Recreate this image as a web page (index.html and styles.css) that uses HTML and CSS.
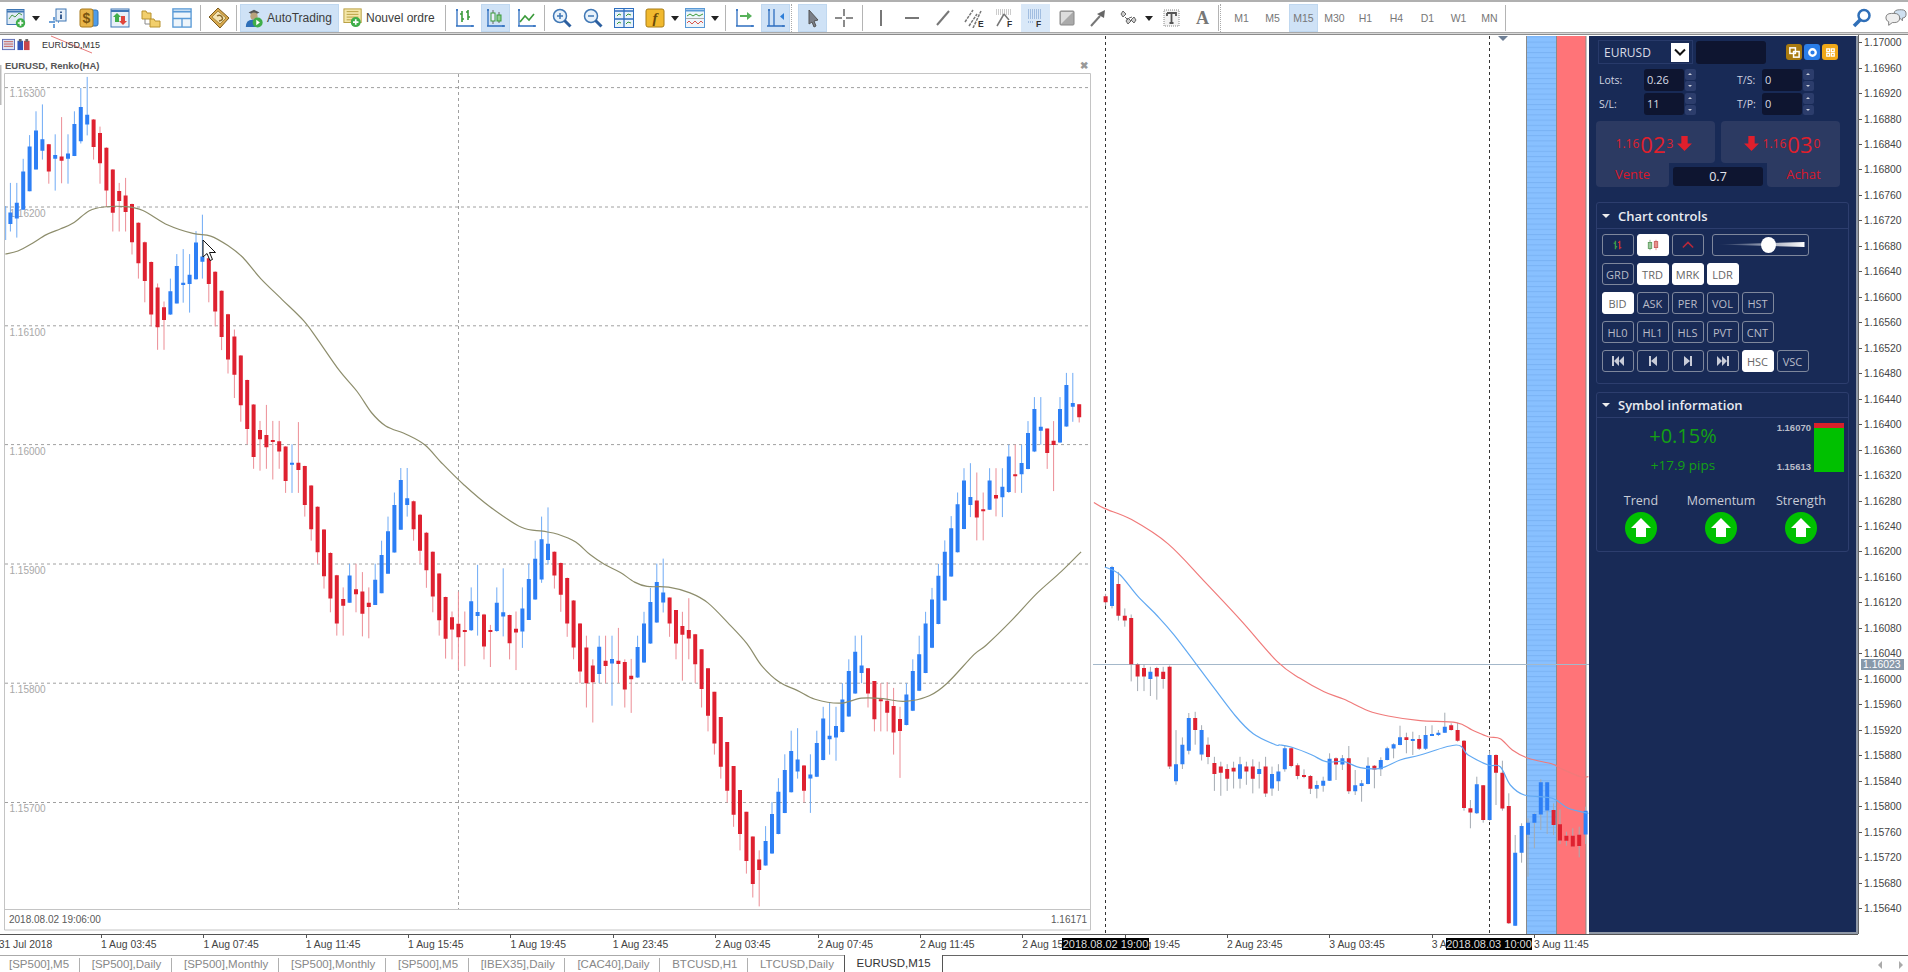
FILE: index.html
```html
<!DOCTYPE html>
<html lang="fr">
<head>
<meta charset="utf-8">
<title>MetaTrader</title>
<link rel="stylesheet" href="styles.css">
</head>
<body>
<div class="page">
  <header class="toolbar">
    <span class="tool"><svg class="ic" viewBox="0 0 20 20"><rect x="1" y="1.5" width="17" height="15" fill="#dfeaf5" stroke="#3f77b5"/><path d="M1 3.5h17" stroke="#3f77b5" stroke-width="2"/><path d="M3 11l3-4 3 2 4-4 3 2" stroke="#4a9a4a" fill="none"/><circle cx="14.5" cy="15" r="4.7" fill="#3fae49"/><path d="M14.5 12.3v5.4M11.8 15h5.4" stroke="#fff" stroke-width="1.7"/></svg></span>
    <span class="caret"></span>
    <span class="tool"><svg class="ic" viewBox="0 0 20 20"><path d="M1 14h6M10 14h1M6 9v3.500M6 16v4" stroke="#3f83cc" stroke-width="1.500" fill="none"/><rect x="8" y="1" width="10" height="12" fill="#e8f0f8" stroke="#3f77b5"/><path d="M13 3.500v1.500M13 6.500v4.500" stroke="#2a4f86" stroke-width="1.800"/></svg></span>
    <span class="tool"><svg class="ic" viewBox="0 0 20 20"><rect x="6" y="2" width="13" height="16" rx="2" fill="#4f9ce8" stroke="#3272b5"/><rect x="1" y="1" width="13" height="18" rx="2" fill="#e8b54a" stroke="#a97a1c"/><text x="7.500" y="15" class="ic-dollar">$</text></svg></span>
    <span class="tool"><svg class="ic" viewBox="0 0 20 20"><rect x="1" y="1" width="18" height="18" fill="#e8f0f8" stroke="#3f77b5"/><path d="M1 3h18" stroke="#3f77b5" stroke-width="2"/><path d="M7 5l4 4H9v5H5V9H3z" fill="#3fae49"/><path d="M13 17l-4-4h2V8h4v5h2z" fill="#e0453a"/></svg></span>
    <span class="tool"><svg class="ic" viewBox="0 0 20 20"><path d="M1 3h4l1 2h4v6H1z" fill="#f2cf6c" stroke="#b8922e"/><path d="M9 11h4l1 2h5v6H9z" fill="#f2cf6c" stroke="#b8922e"/><path d="M4 11v5h5" stroke="#8a8a8a" fill="none"/></svg></span>
    <span class="tool"><svg class="ic" viewBox="0 0 22 22"><rect x="1" y="1" width="20" height="20" fill="#eef5fb" stroke="#5a9ad6" stroke-width="1.500"/><path d="M1 4h20" stroke="#5a9ad6" stroke-width="2"/><path d="M1 11.500h20M11 11.500V21" stroke="#5a9ad6" stroke-width="1.500"/></svg></span>
    <span class="sep sep-6"></span>
    <span class="tool"><svg class="ic big" viewBox="0 0 22 22"><path d="M1 10L10 1l11 10-9 10z" fill="#d9a94e" stroke="#7a5a1c"/><path d="M4 10l6-6 8 7-6 6z" fill="#f4e4b4" stroke="#a98a3c"/><path d="M9 9q3-2 5 1t-3 4" stroke="#8a6a2a" fill="none" stroke-width="1.400"/></svg></span>
    <span class="sep sep-4"></span>
    <span class="labeled active auto"><svg class="ic" viewBox="0 0 22 22"><path d="M5 5l6-3 6 3-6 3z" fill="#555"/><circle cx="11" cy="9" r="4" fill="#b9a27c"/><path d="M2 21q0-9 9-8 4 0 4 3v5z" fill="#2e6fb8"/><circle cx="15" cy="16" r="5.500" fill="#3fae49"/><path d="M13.500 13l4 3-4 3z" fill="#fff"/></svg>AutoTrading</span>
    <span class="labeled order"><svg class="ic" viewBox="0 0 22 22"><rect x="1" y="1" width="19" height="15" fill="#f4e6a8" stroke="#b49a3a"/><path d="M4 4h13M4 7h13M4 10h13M4 13h8" stroke="#b49a3a"/><circle cx="14" cy="15.500" r="5.500" fill="#3fae49"/><path d="M14 12.500v6M11 15.500h6" stroke="#fff" stroke-width="1.800"/></svg>Nouvel ordre</span>
    <span class="sep"></span>
    <span class="tool"><svg class="ic" viewBox="0 0 20 20"><path d="M2 1v17h17M1 18h2M17 17v2M1 2h2" stroke="#2f6fc0" fill="none" stroke-width="1.300"/><path d="M7 3v11M5 6h2M7 11h2M13 2v10M11 4h2M13 9h2" stroke="#3a9a3a" stroke-width="1.600" fill="none"/></svg></span>
    <span class="tool active"><svg class="ic" viewBox="0 0 20 20"><path d="M2 1v17h17M1 18h2M17 17v2M1 2h2" stroke="#2f6fc0" fill="none" stroke-width="1.300"/><path d="M7 2v14M13 4v11" stroke="#666"/><rect x="5" y="5" width="4" height="8" fill="#eef" stroke="#3a9a3a"/><rect x="11" y="7" width="4" height="6" fill="#8fce8f" stroke="#3a9a3a"/></svg></span>
    <span class="tool"><svg class="ic" viewBox="0 0 20 20"><path d="M2 1v17h17M1 18h2M17 17v2M1 2h2" stroke="#2f6fc0" fill="none" stroke-width="1.300"/><path d="M3 14l5-6 4 4 5-6" stroke="#3a9a3a" fill="none" stroke-width="1.600"/></svg></span>
    <span class="sep sep-4"></span>
    <span class="tool"><svg class="ic" viewBox="0 0 20 20"><circle cx="8" cy="8" r="6.500" fill="#e8f2fb" stroke="#3f77b5" stroke-width="1.500"/><path d="M12.500 12.500l6 6" stroke="#2c5f9f" stroke-width="3"/><path d="M8 5v6M5 8h6" stroke="#3f77b5" stroke-width="1.500"/></svg></span>
    <span class="tool"><svg class="ic" viewBox="0 0 20 20"><circle cx="8" cy="8" r="6.500" fill="#e8f2fb" stroke="#3f77b5" stroke-width="1.500"/><path d="M12.500 12.500l6 6" stroke="#2c5f9f" stroke-width="3"/><path d="M5 8h6" stroke="#3f77b5" stroke-width="1.500"/></svg></span>
    <span class="tool"><svg class="ic" viewBox="0 0 20 20"><rect x="0.500" y="0.500" width="19" height="19" fill="#e8f2fb" stroke="#2f6fc0"/><path d="M0.500 3h19M10 1v19M1 11h19" stroke="#2f6fc0" stroke-width="1.300"/><path d="M3 8l2-2 2 1M12 8l2-2 3 1M3 16l2-2 2 1M12 16l2-2 3 1" stroke="#3a9a3a" fill="none"/></svg></span>
    <span class="tool"><svg class="ic" viewBox="0 0 20 20"><rect x="1" y="1" width="18" height="18" rx="2" fill="#f1b92e" stroke="#a87d16"/><text x="10" y="15" class="ic-f">f</text></svg></span>
    <span class="caret narrow"></span>
    <span class="tool"><svg class="ic" viewBox="0 0 20 20"><rect x="0.500" y="0.500" width="19" height="19" fill="#eef5fb" stroke="#5a9ad6"/><path d="M0.500 2.500h19" stroke="#5a9ad6" stroke-width="2"/><path d="M2 8l3-2 3 2 3-2 3 2 4-2" stroke="#3a9a3a" fill="none"/><path d="M1 10.500h18" stroke="#aaa"/><path d="M2 15l2-2 3 3 3-3 3 3 3-3 2 2" stroke="#d8574c" fill="none"/></svg></span>
    <span class="caret"></span>
    <span class="sep"></span>
    <span class="tool"><svg class="ic" viewBox="0 0 20 20"><path d="M2 1v17h17M1 18h2M17 17v2M1 2h2" stroke="#2f6fc0" fill="none" stroke-width="1.300"/><path d="M5 7h7V4l5 4-5 4V9H5z" fill="#57b15a"/></svg></span>
    <span class="tool active"><svg class="ic" viewBox="0 0 20 20"><path d="M3 1v17h16M1 18h3M17 17v2M2 2h2M8 1v17" stroke="#2f6fc0" fill="none" stroke-width="1.300"/><path d="M18 5v7l-4-3.500z" fill="#2f7fd8"/></svg></span>
    <span class="gripper"></span>
    <span class="tool active"><svg class="ic" viewBox="0 0 20 20"><path d="M6 2l9 10-4 1 2 5-2 1-2-5-3 2z" fill="#7b7f88" stroke="#555"/></svg></span>
    <span class="tool"><svg class="ic" viewBox="0 0 20 20"><path d="M1 10h7M12 10h7M10 1v7M10 12v7" stroke="#666" stroke-width="1.500"/></svg></span>
    <span class="sep sep-6"></span>
    <span class="tool"><svg class="ic" viewBox="0 0 20 20"><path d="M10 2v16" stroke="#777" stroke-width="2"/></svg></span>
    <span class="tool"><svg class="ic" viewBox="0 0 20 20"><path d="M3 10h14" stroke="#777" stroke-width="2"/></svg></span>
    <span class="tool"><svg class="ic" viewBox="0 0 20 20"><path d="M4 17L16 3" stroke="#777" stroke-width="2"/></svg></span>
    <span class="tool"><svg class="ic" viewBox="0 0 20 20"><path d="M1 14L9 2M5 18L13 6M9 20L17 3" stroke="#777" stroke-width="1.500" stroke-dasharray="3 1"/><text x="14" y="19" class="ic-letter">E</text></svg></span>
    <span class="tool"><svg class="ic" viewBox="0 0 20 20"><path d="M1 2h16M1 4h16M1 6h16" stroke="#999" stroke-dasharray="1 1"/><path d="M9 6L2 18M9 6l5 6" stroke="#777" stroke-width="1.500"/><text x="12" y="19" class="ic-letter">F</text></svg></span>
    <span class="tool active-soft"><svg class="ic" viewBox="0 0 20 20"><path d="M2 2h14M2 4h14M2 6h14M2 8h14M2 10h14" stroke="#6b93c9" stroke-dasharray="1 1"/><path d="M2 14h5" stroke="#6b93c9" stroke-dasharray="1 1"/><text x="10" y="19" class="ic-letter">F</text></svg></span>
    <span class="tool"><svg class="ic" viewBox="0 0 20 20"><rect x="3" y="3" width="14" height="14" rx="1" fill="#aaa" stroke="#888"/><path d="M4 4h12L4 16z" fill="#ddd"/></svg></span>
    <span class="tool"><svg class="ic" viewBox="0 0 20 20"><path d="M3 18L12 8" stroke="#777" stroke-width="2"/><path d="M17 2l-1 8-7-4z" fill="#666"/></svg></span>
    <span class="tool"><svg class="ic" viewBox="0 0 20 20"><path d="M4 3l3 3-3 3-2-3zM9 10l3 3-3 3-2-3zM15 9l2 3-2 3-3-3zM6 9l3 3M10 10l3-1" stroke="#666" fill="#ccc"/></svg></span>
    <span class="caret wide"></span>
    <span class="tool"><svg class="ic" viewBox="0 0 20 20"><rect x="2" y="2" width="15" height="16" fill="#f3f3f3" stroke="#888" stroke-dasharray="1 1"/><path d="M5 5h9v3M5 5v3M9.500 5v10M7.500 15h4" stroke="#555" stroke-width="1.800" fill="none"/></svg></span>
    <span class="tool"><span class="ic-a">A</span></span>
    <span class="sep sep-mini"></span>
    <span class="gripper"></span>
    <span class="tool tf">M1</span><span class="tool tf">M5</span><span class="tool tf active">M15</span><span class="tool tf">M30</span><span class="tool tf">H1</span><span class="tool tf">H4</span><span class="tool tf">D1</span><span class="tool tf">W1</span><span class="tool tf">MN</span>
    <span class="sep sep-mini"></span>
    <span class="spacer"></span>
    <span class="end-tool"><svg class="ic" viewBox="0 0 20 20"><circle cx="12" cy="7.500" r="5.500" fill="#fff" stroke="#2f6fb8" stroke-width="2.500"/><path d="M8 12l-6 6" stroke="#2f6fb8" stroke-width="3.500"/></svg></span>
    <span class="end-tool chat"><svg class="ic" viewBox="0 0 24 20"><path d="M10 5q0-4 6-4h2q5 0 5 4.500t-4 4.500v3l-3-3z" fill="#cfe0f0" stroke="#777"/><path d="M1 10q0-5 6-5h3q6 0 6 5t-6 5H8l-4 3v-4q-3-1-3-4z" fill="#eee" stroke="#777"/></svg></span>
  </header>
  <div class="toolbar-rule"></div>

  <main class="workspace">
    <section class="chart-area">
      <svg id="canvas" class="canvas" viewBox="0 35 1858 899" xmlns="http://www.w3.org/2000/svg">
        <defs>
          <pattern id="stripes" width="6" height="5.200" patternUnits="userSpaceOnUse">
            <rect width="6" height="5.200" class="band-blue"/>
            <rect width="6" height="1" class="band-stripe"/>
          </pattern>
        </defs>
        <rect x="1527" y="36" width="29.500" height="898" fill="url(#stripes)"/>
        <rect x="1556.500" y="36" width="29.500" height="898" class="band-red"/>
        <path class="band-edge" d="M1526.500 36v898M1556.500 36v898M1586 36v898"/>
        <path class="price-line" d="M1093 664.500H1589"/>
        <path class="cross" d="M1105.500 36V934M1489.500 36V934"/>
        <path class="marker" d="M1498 36h10l-5 5z"/>
        <path class="stray" d="M51 36L92 53"/>
        <path class="edge-bar" d="M0.500 65V105"/>
        <path class="window-edge" d="M4.500 73.500H1090.500V930H4.500ZM4.500 909.500H1090.500"/>
        <path class="grid" d="M5 87.600H1090M5 207H1090M5 325.800H1090M5 444.600H1090M5 564H1090M5 683.200H1090M5 802.500H1090M458.500 74V909"/>
        <text class="grid-label" x="9.500" y="97">1.16300</text>
        <text class="grid-label" x="9.500" y="216.500">1.16200</text>
        <text class="grid-label" x="9.500" y="335.500">1.16100</text>
        <text class="grid-label" x="9.500" y="454.500">1.16000</text>
        <text class="grid-label" x="9.500" y="573.500">1.15900</text>
        <text class="grid-label" x="9.500" y="692.500">1.15800</text>
        <text class="grid-label" x="9.500" y="811.500">1.15700</text>
        <text class="win-foot" x="9" y="923">2018.08.02 19:06:00</text>
        <text class="win-foot" x="1051" y="923">1.16171</text>
        <g id="candles"></g>
        <path class="cursor" d="M203 240v17l4-3.500 3 7 2.500-1-3-7h6z"/>
      </svg>
      <div class="win-tabs">
        <svg class="mini" viewBox="0 0 14 14"><rect x="0.500" y="1.500" width="13" height="11" fill="#dde4f4" stroke="#5c6bb5"/><path d="M2 4h10M2 6.500h10M2 9h10" stroke="#c2574f"/></svg>
        <svg class="mini" viewBox="0 0 14 14"><rect x="0.500" y="3" width="6" height="10" fill="#3356b8"/><rect x="7.500" y="3" width="6" height="10" fill="#c9464a"/><path d="M2 1h3v3H2zM9 1h3v3H9z" fill="#666"/></svg>
        <span class="win-name">EURUSD,M15</span>
      </div>
      <div class="inner-title"><span>EURUSD, Renko(HA)</span><span class="close">✖</span></div>

      <aside class="panel">
        <div class="p-top">
          <div class="combo"><span>EURUSD</span><span class="combo-btn"><svg viewBox="0 0 12 8" class="chev"><path d="M1 1.500l5 5 5-5" fill="none" stroke="#111" stroke-width="2"/></svg></span></div>
          <div class="dark-input blank"></div>
          <div class="p-icons">
            <span class="pi dark-gold"><svg viewBox="0 0 14 14"><rect x="2" y="2" width="6" height="6" fill="none" stroke="#fff" stroke-width="1.600"/><rect x="6" y="6" width="6" height="6" fill="none" stroke="#fff" stroke-width="1.600"/></svg></span>
            <span class="pi blue"><svg viewBox="0 0 14 14"><circle cx="7" cy="7" r="3.500" fill="none" stroke="#fff" stroke-width="2.500"/></svg></span>
            <span class="pi gold"><svg viewBox="0 0 14 14"><path d="M3 3h3v3H3zM8 3h3v3H8zM3 8h3v3H3zM8 8h3v3H8z" fill="none" stroke="#fff" stroke-width="1.400"/></svg></span>
          </div>
        </div>
        <div class="field-row">
          <label class="f-label">Lots:</label><span class="f-input">0.26</span><span class="spin"><i class="up"></i><i class="down"></i></span>
          <label class="f-label right">T/S:</label><span class="f-input">0</span><span class="spin"><i class="up"></i><i class="down"></i></span>
        </div>
        <div class="field-row">
          <label class="f-label">S/L:</label><span class="f-input">11</span><span class="spin"><i class="up"></i><i class="down"></i></span>
          <label class="f-label right">T/P:</label><span class="f-input">0</span><span class="spin"><i class="up"></i><i class="down"></i></span>
        </div>
        <div class="trade">
          <div class="trade-top">
            <div class="quote sell"><span class="q-s">1.16</span><span class="q-b">02</span><span class="q-s">3</span><svg class="q-arrow" viewBox="0 0 16 16"><path d="M5 1h6v7h4l-7 7-7-7h4z"/></svg></div>
            <div class="quote buy"><svg class="q-arrow" viewBox="0 0 16 16"><path d="M5 1h6v7h4l-7 7-7-7h4z"/></svg><span class="q-s">1.16</span><span class="q-b">03</span><span class="q-s">0</span></div>
          </div>
          <div class="trade-bottom">
            <div class="side left">Vente</div>
            <div class="spread"><span>0.7</span></div>
            <div class="side right">Achat</div>
          </div>
        </div>

        <section class="box controls">
          <h2 class="box-head"><i class="tri"></i>Chart controls</h2>
          <div class="btn-rows">
            <div class="btn-row">
              <span class="btn"><svg class="b-ic" viewBox="0 0 14 14"><path d="M4 2v10M2 5h2M4 9h2" stroke="#3a9a4a" stroke-width="1.600" fill="none"/><path d="M9 2v10M7 4h2M9 10h2" stroke="#c8303a" stroke-width="1.600" fill="none"/></svg></span>
              <span class="btn on"><svg class="b-ic" viewBox="0 0 14 14"><path d="M3.500 1v12" stroke="#8a8"/><rect x="1.500" y="4" width="4" height="7" fill="#9cc89c" stroke="#5a9a5a"/><path d="M10.500 1v12" stroke="#d88"/><rect x="8.500" y="3" width="4" height="7" fill="#e8908a" stroke="#c85a5a"/></svg></span>
              <span class="btn"><svg class="b-ic" viewBox="0 0 14 14"><path d="M1 10l6-6 6 6" stroke="#b8283a" stroke-width="1.800" fill="none"/></svg></span>
              <span class="btn slider"><span class="track"></span><span class="thumb"></span></span>
            </div>
            <div class="btn-row"><span class="btn">GRD</span><span class="btn on">TRD</span><span class="btn on">MRK</span><span class="btn on">LDR</span></div>
            <div class="btn-row"><span class="btn on">BID</span><span class="btn">ASK</span><span class="btn">PER</span><span class="btn">VOL</span><span class="btn">HST</span></div>
            <div class="btn-row"><span class="btn">HL0</span><span class="btn">HL1</span><span class="btn">HLS</span><span class="btn">PVT</span><span class="btn">CNT</span></div>
            <div class="btn-row">
              <span class="btn"><svg class="b-ic" viewBox="0 0 14 10"><path d="M1 0h2v10H1zM8 0v10L3 5zM13 0v10L8 5z" fill="#c8ccd8"/></svg></span>
              <span class="btn"><svg class="b-ic" viewBox="0 0 14 10"><path d="M3 0h2v10H3zM11 0v10L5 5z" fill="#c8ccd8"/></svg></span>
              <span class="btn"><svg class="b-ic" viewBox="0 0 14 10"><path d="M9 0h2v10H9zM3 0v10l6-5z" fill="#c8ccd8"/></svg></span>
              <span class="btn"><svg class="b-ic" viewBox="0 0 14 10"><path d="M11 0h2v10h-2zM1 0v10l5-5zM6 0v10l5-5z" fill="#c8ccd8"/></svg></span>
              <span class="btn on">HSC</span><span class="btn">VSC</span>
            </div>
          </div>
        </section>

        <section class="box info">
          <h2 class="box-head"><i class="tri"></i>Symbol information</h2>
          <div class="info-top">
            <div class="change"><div class="pct">+0.15%</div><div class="pips">+17.9 pips</div></div>
            <div class="range-labels"><span>1.16070</span><span>1.15613</span></div>
            <div class="range-bar"><div class="range-hi"></div></div>
          </div>
          <div class="signals">
            <div class="signal"><span>Trend</span><svg class="up-dot" viewBox="0 0 32 32"><circle cx="16" cy="16" r="16"/><path d="M16 6l10 10h-5v9H11v-9H6z"/></svg></div>
            <div class="signal"><span>Momentum</span><svg class="up-dot" viewBox="0 0 32 32"><circle cx="16" cy="16" r="16"/><path d="M16 6l10 10h-5v9H11v-9H6z"/></svg></div>
            <div class="signal"><span>Strength</span><svg class="up-dot" viewBox="0 0 32 32"><circle cx="16" cy="16" r="16"/><path d="M16 6l10 10h-5v9H11v-9H6z"/></svg></div>
          </div>
        </section>
      </aside>
    </section>

    <aside class="price-axis">
      <ul class="prices">
        <li>1.17000</li><li>1.16960</li><li>1.16920</li><li>1.16880</li><li>1.16840</li><li>1.16800</li><li>1.16760</li><li>1.16720</li><li>1.16680</li><li>1.16640</li><li>1.16600</li><li>1.16560</li><li>1.16520</li><li>1.16480</li><li>1.16440</li><li>1.16400</li><li>1.16360</li><li>1.16320</li><li>1.16280</li><li>1.16240</li><li>1.16200</li><li>1.16160</li><li>1.16120</li><li>1.16080</li><li>1.16040</li><li>1.16000</li><li>1.15960</li><li>1.15920</li><li>1.15880</li><li>1.15840</li><li>1.15800</li><li>1.15760</li><li>1.15720</li><li>1.15680</li><li>1.15640</li>
      </ul>
      <span class="price-tag">1.16023</span>
    </aside>
  </main>

  <div class="time-axis">
    <span>31 Jul 2018</span><span>1 Aug 03:45</span><span>1 Aug 07:45</span><span>1 Aug 11:45</span><span>1 Aug 15:45</span><span>1 Aug 19:45</span><span>1 Aug 23:45</span><span>2 Aug 03:45</span><span>2 Aug 07:45</span><span>2 Aug 11:45</span><span>2 Aug 15:45</span><span>2 Aug 19:45</span><span>2 Aug 23:45</span><span>3 Aug 03:45</span><span>3 Aug 07:45</span><span>3 Aug 11:45</span>
    <b class="time-flag first">2018.08.02 19:00</b>
    <b class="time-flag second">2018.08.03 10:00</b>
  </div>

  <nav class="tabs">
    <a>[SP500],M5</a><a>[SP500],Daily</a><a>[SP500],Monthly</a><a>[SP500],Monthly</a><a>[SP500],M5</a><a>[IBEX35],Daily</a><a>[CAC40],Daily</a><a>BTCUSD,H1</a><a class="last">LTCUSD,Daily</a><a class="current">EURUSD,M15</a>
    <span class="tab-rest"><i class="nav-l"></i><i class="nav-r"></i></span>
  </nav>
</div>
<script src="chart.js"></script>
</body>
</html>
```
FILE: styles.css
```css
*{box-sizing:border-box}
html,body{margin:0;padding:0;background:#fff}
body{font-family:"Liberation Sans",Arial,sans-serif;color:#444}
.page{width:1908px;height:972px;overflow:hidden;display:flex;flex-direction:column}

.toolbar{height:32px;flex:none;border-top:2px solid #b0b0b0;display:flex;align-items:center;background:#fff;padding-top:2px}
.toolbar-rule{height:3px;flex:none;border-top:1px solid #a8a8a8;border-bottom:1px solid #8c8c8c;background:#d8d8d8}
.tool{width:31px;height:28px;flex:none;display:flex;align-items:center;justify-content:center;color:#777;font-size:10.5px}
.ic{width:20px;height:20px;flex:none;display:block}
.ic.big{width:22px;height:22px}
.active{background:#cfe2f6;box-shadow:inset 0 0 0 1px #c0d8f0}
.active-soft{background:#d9e8f8}
.tool.active,.tool.active-soft{background-clip:padding-box;border:0 solid transparent;border-width:0 .5px}
.caret{width:11px;height:28px;flex:none;position:relative}
.caret:after{content:"";position:absolute;left:1px;top:12px;border:4px solid transparent;border-top:5px solid #222;border-bottom:0}
.caret.narrow{width:9px}
.caret.wide{width:12px}
.sep{width:8px;height:28px;flex:none;position:relative}
.sep:after{content:"";position:absolute;left:3.500px;top:1px;bottom:1px;border-left:1px solid #b4b4b4}
.sep-6{width:6px}
.sep-6:after{left:2.500px}
.sep-4{width:4px}
.sep-4:after{left:1.500px}
.sep-mini{width:2px}
.sep-mini:after{left:0}
.gripper{width:6px;height:28px;flex:none;border-left:1px dotted #aaa}
.labeled{height:28px;flex:none;display:flex;align-items:center;font-size:12px;color:#3c3c3c}
.auto{width:99px;margin-left:2px;padding-left:4px;gap:3px}
.order{width:101px;margin-left:1px;padding-left:3px;gap:3px}
.spacer{flex:1}
.end-tool{width:20px;height:28px;display:flex;align-items:center;justify-content:center;margin-right:13px}
.end-tool.chat{width:22px;margin-right:1px}
.end-tool.chat .ic{width:22px}
.ic-dollar{font:bold 14px "Liberation Sans",sans-serif;fill:#7a5510;text-anchor:middle}
.ic-f{font:italic bold 15px "Liberation Serif",serif;fill:#6a4a08;text-anchor:middle}
.ic-letter{font:bold 8.500px "Liberation Sans",sans-serif;fill:#333}
.ic-a{font:bold 18px "Liberation Serif",serif;color:#777}

.workspace{height:899px;flex:none;display:flex}
.chart-area{width:1858px;flex:none;position:relative}
.canvas{position:absolute;left:0;top:0;width:1858px;height:899px;display:block}
.band-blue{fill:#88c0ff}
.band-stripe{fill:#79b2f4}
.band-red{fill:#ff7478}
.band-edge{stroke:#8a8a8a;fill:none;stroke-width:1}
.price-line{stroke:#a4b8ca;fill:none}
.cross{stroke:#333;stroke-dasharray:3 3;fill:none}
.marker{fill:#6e7f95}
.stray{stroke:#e87a7a;fill:none}
.edge-bar{stroke:#bbb;stroke-width:2;fill:none}
.window-edge{stroke:#c4c4c4;fill:#fff}
.grid{stroke:#a0a0a0;stroke-dasharray:3 3;fill:none}
.grid-label{font:10px "Liberation Sans",sans-serif;fill:#a8a8a8}
.win-foot{font:10px "Liberation Sans",sans-serif;fill:#5a5a5a}
.cursor{fill:#fff;stroke:#111}
.w-b{stroke:#6eaaf5;fill:none}
.w-r{stroke:#ec8d95;fill:none}
.w-g{stroke:#a4abb2;fill:none}
.b-b{stroke:#2d7ff5;stroke-width:4;fill:none}
.b-r{stroke:#de2130;stroke-width:4;fill:none}
.ma-o{stroke:#8d8d6c;stroke-width:1.200;fill:none}
.ma-r{stroke:#f07a7a;stroke-width:1.200;fill:none}
.ma-b{stroke:#62a9f2;stroke-width:1.200;fill:none}

.win-tabs{position:relative;height:17px;margin-top:1px;display:flex;align-items:center;gap:2px;padding-left:2px}
.mini{width:13px;height:13px;flex:none}
.win-name{font-size:9px;color:#333;margin-left:10px}
.inner-title{position:relative;width:1090px;height:15px;margin-top:5px;padding:0 2px 0 5px;display:flex;justify-content:space-between;align-items:center;font-size:9.500px;color:#555;font-weight:bold}
.close{color:#999;font-size:10px}

.panel{position:absolute;left:1589px;top:1px;width:269px;height:898px;background:#182a56;border-right:2px solid #8f98a6;border-bottom:2px solid #8f98a6;font-family:"Open Sans","Noto Sans",sans-serif;color:#d8dce6}
.p-top{display:flex;align-items:center;margin:4px 0 0 9px;height:24px}
.combo{width:95px;height:24px;border:1px solid #283a6a;display:flex;align-items:center;justify-content:space-between;padding:0 3px 0 5px;font-size:12px;color:#d8dce6}
.combo-btn{width:18px;height:19px;background:#fff;display:flex;align-items:center;justify-content:center}
.chev{width:12px;height:8px}
.dark-input{background:#0e1530;border-radius:3px}
.blank{width:70px;height:23px;margin-left:3px}
.p-icons{display:flex;gap:2px;margin-left:20px}
.pi{width:16px;height:16px;border-radius:3px;display:flex;align-items:center;justify-content:center}
.pi svg{width:13px;height:13px}
.dark-gold{background:#a87a10}
.blue{background:#2a7de8}
.gold{background:#f0a818}
.field-row{display:flex;align-items:center;height:22px;margin:2px 0 0 10px;font-size:10.500px}
.p-top + .field-row{margin-top:5px}
.f-label{width:45px;color:#d0d4e0}
.f-label.right{width:25px;margin-left:41px}
.f-input{width:40px;height:22px;background:#0e1530;border-radius:3px;color:#d8dce6;line-height:22px;padding-left:3px;font-size:11px}
.spin{width:11px;height:22px;margin-left:1px;display:flex;flex-direction:column;gap:1px}
.spin i{flex:1;background:#2c3d6c;position:relative;border-radius:2px}
.spin i:after{content:"";position:absolute;left:3px;top:4px;border:2.500px solid transparent}
.spin .up:after{border-bottom-color:#c8ccd8;border-top:0}
.spin .down:after{border-top-color:#c8ccd8;border-bottom:0}
.trade{margin:6px 0 0 7px;width:244px;color:#e01f2c}
.trade-top{display:flex;gap:6px}
.quote{width:119px;height:42px;background:#2c3a62;display:flex;align-items:center;justify-content:center;gap:1px;padding-top:3px}
.quote.sell{border-radius:4px 4px 4px 0}
.quote.buy{border-radius:4px 4px 0 4px}
.q-s{font-size:12px}
.q-b{font-size:22px;line-height:24px}
.q-arrow{width:17px;height:17px;fill:#e01f2c;margin:0 2px}
.trade-bottom{display:flex;height:24px}
.side{width:73px;background:#2c3a62;font-size:13px;line-height:22px;text-align:center;color:#d9182b}
.side.left{border-radius:0 0 4px 4px}
.side.right{border-radius:0 0 4px 4px}
.spread{width:98px;padding:4px 4px 1px}
.spread span{display:block;height:19px;background:#0e1530;border-radius:3px;color:#e4e6ee;font-size:12.500px;line-height:19px;text-align:center}
.box{width:253px;margin-left:7px;border:1px solid #2d3e6e;border-radius:3px}
.controls{margin-top:15px;height:182px}
.info{margin-top:8px;height:160px}
.box-head{margin:0;height:26px;border-bottom:1px solid #2d3e6e;display:flex;align-items:center;padding-left:5px;font-size:13px;font-weight:600;color:#e8eaf0}
.info .box-head{height:25px}
.tri{width:0;height:0;border:4px solid transparent;border-top:4.500px solid #eee;border-bottom:0;margin-right:8px}
.btn-rows{padding:5px 0 0 4.500px;display:flex;flex-direction:column;gap:7px}
.btn-row{display:flex;gap:3px;height:22px}
.btn{width:32px;height:22px;border:1px solid #7e879c;border-radius:3px;display:flex;align-items:center;justify-content:center;font-size:11px;color:#b8bcc8}
.btn.on{background:#fff;border-color:#fff;color:#666}
.b-ic{width:14px;height:12px}
.slider{width:97px;margin-left:5px;position:relative}
.track{position:absolute;left:4px;right:3px;top:7px;height:5px;background:linear-gradient(90deg,transparent,#fff);clip-path:polygon(0 50%,100% 0,100% 100%)}
.thumb{position:absolute;left:48px;top:2px;width:15px;height:16px;border-radius:50%;background:#fff}
.info-top{display:flex;height:75px}
.change{width:172px;text-align:center;color:#14a014;padding-top:5px}
.pct{font-size:20px;line-height:26px}
.pips{font-size:13.500px;line-height:18px;margin-top:7px}
.range-labels{width:42px;height:50px;margin-top:4px;display:flex;flex-direction:column;justify-content:space-between;text-align:right;font:bold 9.500px/11px "Liberation Sans",sans-serif;color:#b8bcc8}
.range-bar{width:30px;height:49px;margin:5px 0 0 3px;background:#00c000}
.range-hi{height:5px;background:#d8202a}
.signals{display:flex;padding-left:4px}
.signal{width:80px;display:flex;flex-direction:column;align-items:center;font-size:12.500px;color:#c8ccd6;line-height:16px}
.up-dot{width:32px;height:32px;margin-top:3px}
.up-dot circle{fill:#00c000}
.up-dot path{fill:#fff}

.price-axis{width:50px;flex:none;position:relative;border-left:1px solid #666;overflow:hidden}
.prices{list-style:none;margin:-4.900px 0 0;padding:0}
.prices li{height:25.470px;line-height:25.470px;font-size:10.400px;color:#444;padding-left:5px;position:relative}
.prices li:before{content:"";position:absolute;left:0;top:12px;width:3px;border-top:1px solid #555}
.price-tag{position:absolute;left:2px;top:624px;width:43px;height:11px;line-height:11px;background:#8899aa;color:#fff;font-size:10.400px;padding-left:2px}

.time-axis{height:21px;flex:none;border-top:1px solid #555;display:flex;position:relative;font-size:10.400px;color:#444;width:1858px}
.time-axis span{width:102.360px;flex:none;padding-top:4px;line-height:12px;position:relative;white-space:nowrap}
.time-axis span:first-child{margin-left:-1.350px}
.time-axis span:before{content:"";position:absolute;left:0;top:0;height:3px;border-left:1px solid #555}
.time-flag{position:absolute;top:3px;height:12px;line-height:12px;background:#000;color:#ddd;font-weight:normal;text-align:center;font-size:11px}
.time-flag.first{left:1062px;width:87px}
.time-flag.second{left:1446px;width:86px}

.tabs{height:17px;flex:none;display:flex;font-size:11.500px;color:#888;margin-left:-3px;line-height:17px}
.tabs a{padding:0 10.600px 0 12px;border-top:1px solid #aaa;position:relative;white-space:nowrap}
.tabs a:after{content:"";position:absolute;right:0;top:2px;bottom:0;border-right:1px solid #b0b0b0}
.tabs a.last:after{display:none}
.tabs a.current{border-top:0;border-left:1px solid #555;border-right:1px solid #555;color:#333;padding:0 11px}
.tabs a.current:after{display:none}
.tab-rest{flex:1;border-top:1px solid #666;position:relative}
.tab-rest i{position:absolute;top:5px;border:4px solid transparent}
.nav-l{right:26px;border-right-color:#aaa!important;border-left:0!important}
.nav-r{right:5px;border-left-color:#aaa!important;border-right:0!important}
```
FILE: chart.js
```js
(function () {
  // Each candle: wick top, body top, body bottom, wick bottom, direction.
  var upperLeft = "295,372,402,422,B 295,347,388,438,B 232,265,365,365,B 170,200,317,317,B 108,158,260,260,B 90,181,211,234,B 193,194,265,297,R 168,222,232,315,B 123,226,237,296,R 168,218,232,297,B 108,141,225,225,B 47,97,186,192,B 18,117,142,171,B 128,129,201,234,R 148,165,244,297,R 202,203,315,358,R 259,260,373,422,R 295,316,342,422,R 282,328,371,422,R 349,350,450,482,R 398,399,505,545,R 448,450,551,607,R 500,502,639,670,R 558,568,672,731,R 605,620,653,731,R 545,578,639,640,B 481,512,610,610,B 468,556,562,608,B 481,535,559,634,B 421,451,547,548,B 378,487,501,545,B 487,492,559,607,R 526,527,631,670,R 576,577,698,732,R 637,638,756,793,R 678,696,796,857,R 745,746,876,919,R 809,810,938,978,R 873,874,1011,1042,R 917,941,965,1047,R 875,954,986,1042,R 917,967,972,1070,R 917,970,997,1042,R 983,984,1074,1105,R 978,1026,1030,1105,B 920,1026,1045,1105,R 1034,1035,1137,1167,R 1085,1086,1200,1230,R 1140,1141,1260,1290,R 1200,1201,1323,1355,R 1260,1262,1381,1417,R 1319,1320,1446,1478,R 1352,1382,1400,1478,R 1290,1321,1392,1392,B 1290,1357,1370,1417,R 1312,1363,1421,1480,R 1352,1392,1403,1485,R 1290,1332,1398,1398,B 1230,1267,1367,1367,B 1167,1205,1316,1316,B 1104,1137,1261,1261,B 1040,1071,1201,1201,B 1040,1119,1137,1167,B 1125,1127,1200,1230,R 1160,1162,1256,1290,R 1207,1209,1307,1353,R 1258,1259,1376,1417,R 1315,1316,1438,1478,R 1376,1377,1486,1538,R 1415,1430,1462,1540,R 1363,1447,1482,1568,R 1415,1463,1468,1558,R 1352,1388,1464,1466,B 1293,1416,1427,1478,B 1421,1423,1506,1540,R 1450,1463,1467,1560,R 1352,1392,1466,1468,B 1302,1417,1428,1480,B 1423,1424,1498,1540,R 1415,1460,1470,1568,R 1352,1407,1467,1510,B 1290,1330,1437,1437,B 1230,1277,1384,1384,B 1167,1226,1331,1340,B 1143,1238,1280,1292,B";
  var lowerLeft = "536,537,603,640,R 567,568,657,705,R 609,610,738,775,R 672,673,805,838,R 737,738,872,905,R 772,805,905,973,R 838,855,902,1015,R 772,803,879,905,B 772,842,857,905,R 772,837,850,968,B 750,842,851,905,R 838,846,923,973,R 837,884,894,988,R 772,804,889,890,B 705,738,847,848,B 638,678,794,795,B 570,622,735,736,B 556,651,679,707,B 665,665,738,775,R 700,700,794,838,R 705,745,769,898,R 667,756,780,838,R 767,768,852,905,R 810,810,921,973,R 863,863,996,1040,R 929,929,1074,1105,R 1000,1000,1139,1172,R 1070,1070,1206,1239,R 1137,1137,1273,1307,R 1204,1204,1327,1373,R 1265,1265,1403,1438,R 1334,1334,1467,1505,R 1373,1399,1428,1530,R 1305,1347,1415,1416,B 1238,1271,1382,1383,B 1171,1209,1327,1328,B 1104,1148,1268,1269,B 1038,1095,1210,1211,B 1031,1119,1152,1172,B 1134,1135,1206,1239,R 1104,1161,1172,1268,B 1038,1072,1167,1168,B 971,1004,1120,1121,B 958,1052,1062,1105,B 971,1025,1057,1122,B 905,951,1042,1043,B 838,871,998,999,B 772,817,934,935,B 771,855,876,905,B 863,863,934,973,R 899,899,1006,1040,R 905,950,955,1040,R 902,954,988,1040,R 918,969,1043,1105,R 971,1005,1039,1170,R 905,937,1022,1023,B 838,871,982,983,B 772,824,926,927,B 705,738,876,877,B 638,671,806,807,B 571,604,739,740,B 505,537,673,674,B 437,471,606,607,B 371,404,538,539,B 303,337,473,474,B 289,384,406,440,B 315,393,441,505,R 371,418,422,505,R 303,337,419,420,B 303,378,388,438,R 303,355,384,440,B 237,270,370,372,B 237,320,324,372,R 237,288,320,372,B 171,204,305,306,B 104,137,256,258,B 104,187,198,237,B 192,192,260,305,R 171,226,238,367,R 104,137,231,232,B 36,70,186,187,B 36,120,131,173,B 124,124,160,175,R";
  var rightEarly = "488,490,495,498,R 465,466,498,500,B 470,480,506,510,R 500,506,510,515,R 505,508,546,560,R 545,546,556,568,R 546,549,556,568,R 548,552,558,572,B 548,549,556,575,R 548,552,558,566,R 547,548,630,632,R 600,628,642,645,B 606,612,628,632,B 586,590,617,620,B 585,590,600,612,R 596,600,620,625,B 606,612,622,628,R 622,627,636,650,R 626,630,635,654,R 628,632,640,650,R 626,631,634,648,R 622,628,640,648,B 626,630,634,645,R 624,630,640,652,R 626,632,636,648,B 622,630,652,655,R 630,636,648,654,B 628,634,642,650,B";
  var rightLate = "315,325,388,395,B 322,325,378,382,R 370,376,408,418,R 388,405,408,415,R 405,408,446,462,R 422,435,446,475,B 410,422,437,455,B 340,356,422,423,B 352,355,374,420,R 345,355,374,390,B 318,355,454,462,R 390,436,454,465,B 420,430,438,485,B 352,377,432,433,B 375,377,388,445,R 352,360,388,408,B 320,325,360,361,B 310,313,326,355,B 257,292,315,316,B 278,292,300,340,R 275,297,300,345,B 285,297,326,330,R 258,285,326,330,B 256,282,286,287,B 270,278,285,288,B 218,260,278,279,B 250,256,270,272,R 248,270,302,305,R 300,302,504,512,R 480,505,518,565,R 410,433,520,522,B 435,436,540,548,R 332,345,540,542,B 343,345,398,495,R 362,398,505,512,R 460,498,850,852,R 585,638,857,858,B 550,558,638,668,B 535,548,584,710,B 520,522,548,625,B 418,427,524,570,B 425,427,512,582,B 490,510,555,585,R 508,553,602,612,R 575,587,602,617,R 565,587,619,620,R 560,584,618,652,R 500,512,583,612,B";

  function parse(text) {
    return text.split(" ").map(function (item) {
      var p = item.split(",");
      return { w1: +p[0], b1: +p[1], b2: +p[2], w2: +p[3], d: p[4] };
    });
  }

  var paths = { wb: "", wr: "", bb: "", br: "", gw: "" };

  function add(c, x, yOf, wickKey) {
    var y1 = yOf(c.w1), y2 = yOf(c.b1), y3 = yOf(c.b2), y4 = yOf(c.w2);
    var wick = "M" + x.toFixed(1) + " " + y1.toFixed(1) + "V" + y4.toFixed(1);
    var h = Math.max(y3 - y2, 2);
    var body = "M" + x.toFixed(1) + " " + y2.toFixed(1) + "v" + h.toFixed(1);
    paths[wickKey || (c.d === "B" ? "wb" : "wr")] += wick;
    paths[c.d === "B" ? "bb" : "br"] += body;
  }

  var i = 0;
  parse(upperLeft).forEach(function (c) {
    add(c, 10.36 + 6.4 * i++, function (v) { return 70 + v / 2.613; });
  });
  parse(lowerLeft).forEach(function (c) {
    add(c, 10.36 + 6.4 * i++, function (v) { return 360 + v / 2.8; });
  });

  var early = parse(rightEarly);
  early.forEach(function (c, k) {
    add(c, 1284.8 - 6.4 * (early.length - k), function (v) { return v * 1.2168; }, "gw");
  });
  parse(rightLate).forEach(function (c, k) {
    add(c, 1284.8 + 6.4 * k, function (v) { return 640 + v / 3; }, "gw");
  });

  function pts(points, fx, fy) {
    var out = [];
    for (var n = 0; n < points.length; n += 2) {
      out.push([fx(points[n]), fy(points[n + 1])]);
    }
    return out;
  }

  // A Catmull-Rom curve through the traced points keeps the moving averages smooth.
  function smooth(p) {
    var d = "M" + p[0][0].toFixed(1) + " " + p[0][1].toFixed(1);
    for (var n = 0; n < p.length - 1; n++) {
      var a = p[n - 1] || p[n], b = p[n], c = p[n + 1], e = p[n + 2] || c;
      d += "C" + (b[0] + (c[0] - a[0]) / 6).toFixed(1) + " " + (b[1] + (c[1] - a[1]) / 6).toFixed(1) +
        " " + (c[0] - (e[0] - b[0]) / 6).toFixed(1) + " " + (c[1] - (e[1] - b[1]) / 6).toFixed(1) +
        " " + c[0].toFixed(1) + " " + c[1].toFixed(1);
    }
    return d;
  }

  var maA = [15,481,50,473,90,453,130,430,170,415,205,400,250,368,290,358,350,357,400,367,470,405,540,427,590,434,640,460,680,490,730,545,790,600,850,655,890,705,950,785,1000,840,1040,895,1080,930,1140,953,1190,980,1240,1030,1300,1085,1370,1140,1460,1195,1520,1205];
  var maB = [50,488,100,510,140,545,180,572,225,595,265,622,300,634,360,636,420,652,470,680,530,740,580,795,620,855,670,902,720,925,770,950,840,961,900,947,960,948,1020,956,1090,940,1140,905,1215,825,1250,798,1320,730,1390,655,1460,592,1515,537];
  var olive = smooth(
    pts(maA, function (v) { return v / 2.8; }, function (v) { return 70 + v / 2.613; })
      .concat(pts(maB, function (v) { return 540 + v / 2.8; }, function (v) { return 360 + v / 2.8; }))
  );

  var s = 1.2168;
  var redA = [899,413,908,418,930,427,960,447,990,478,1020,510,1050,544];
  var redB = [50,115,110,155,160,178,220,212,270,228,350,242,440,248,480,270,520,290,550,296,580,330,620,355,680,372,700,385,750,410,770,410];
  var blueA = [908,466,920,472,935,490,950,505,965,522,990,555,1015,588,1030,603,1048,612];
  var blueB = [0,315,30,322,80,345,115,365,160,365,200,383,250,385,300,360,350,345,440,315,470,345,520,375,550,380,575,435,610,465,680,475,720,505,770,520];
  function fs(v) { return v * s; }
  function zx(v) { return 1280 + v / 2.497; }
  function zy(v) { return 640 + v / 3; }
  var red = smooth(pts(redA, fs, fs).concat(pts(redB, zx, zy)));
  var blue = smooth(pts(blueA, fs, fs).concat(pts(blueB, zx, zy)));

  var NS = "http://www.w3.org/2000/svg";
  var host = document.getElementById("candles");
  [["w-b", paths.wb], ["w-r", paths.wr], ["w-g", paths.gw], ["b-b", paths.bb], ["b-r", paths.br],
   ["ma-o", olive], ["ma-r", red], ["ma-b", blue], ["w-b", "M5.7 206V240"]].forEach(function (e) {
    var p = document.createElementNS(NS, "path");
    p.setAttribute("class", e[0]);
    p.setAttribute("d", e[1]);
    host.appendChild(p);
  });
})();
```
